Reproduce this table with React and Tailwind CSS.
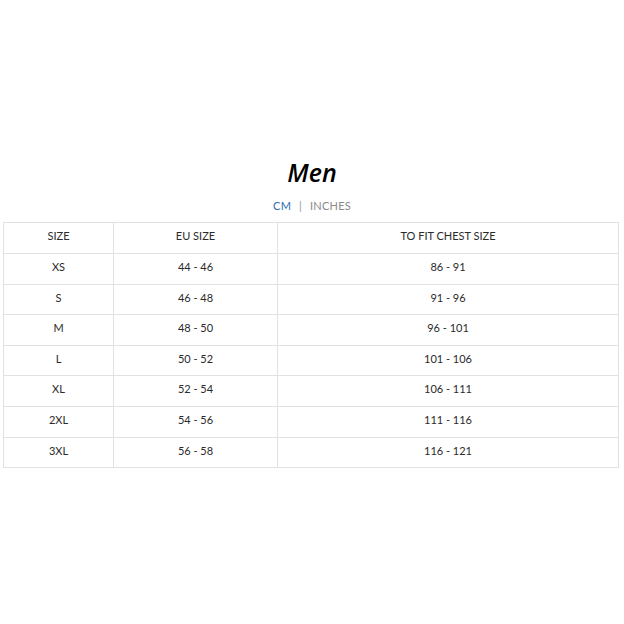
const ROWS = [
  ["XS", "44 - 46", "86 - 91"],
  ["S", "46 - 48", "91 - 96"],
  ["M", "48 - 50", "96 - 101"],
  ["L", "50 - 52", "101 - 106"],
  ["XL", "52 - 54", "106 - 111"],
  ["2XL", "54 - 56", "111 - 116"],
  ["3XL", "56 - 58", "116 - 121"],
];

export default function App() {
  return (
    <div className="w-[624px] h-[624px] bg-white font-['Lato',sans-serif] text-[#2a2a2a]">
      <div className="pt-[156px] flex flex-col items-center">
        <h1 className="text-[25px] italic font-semibold text-black leading-[32px] font-['Open_Sans',sans-serif]">Men</h1>
        <div className="mt-[11px] flex items-center gap-[8px] text-[11px] leading-[14px] tracking-[0.02em]">
          <span className="text-[#2a6db3]">CM</span>
          <span className="text-[#999]">|</span>
          <span className="text-[#8a8a8a]">INCHES</span>
        </div>
      </div>
      <table className="ml-[3px] mt-[9px] w-[616px] border-collapse text-[11px] text-center">
        <thead>
          <tr className="h-[31px]">
            <th className="w-[110px] border border-[#e2e2e2] font-normal pb-[3px]">SIZE</th>
            <th className="w-[164px] border border-[#e2e2e2] font-normal pb-[3px]">EU SIZE</th>
            <th className="border border-[#e2e2e2] font-normal pb-[3px]">TO FIT CHEST SIZE</th>
          </tr>
        </thead>
        <tbody>
          {ROWS.map((r) => (
            <tr key={r[0]} className="h-[30.6px]">
              {r.map((c, i) => (
                <td key={i} className="border border-[#e2e2e2] pb-[3px]">{c}</td>
              ))}
            </tr>
          ))}
        </tbody>
      </table>
    </div>
  );
}
